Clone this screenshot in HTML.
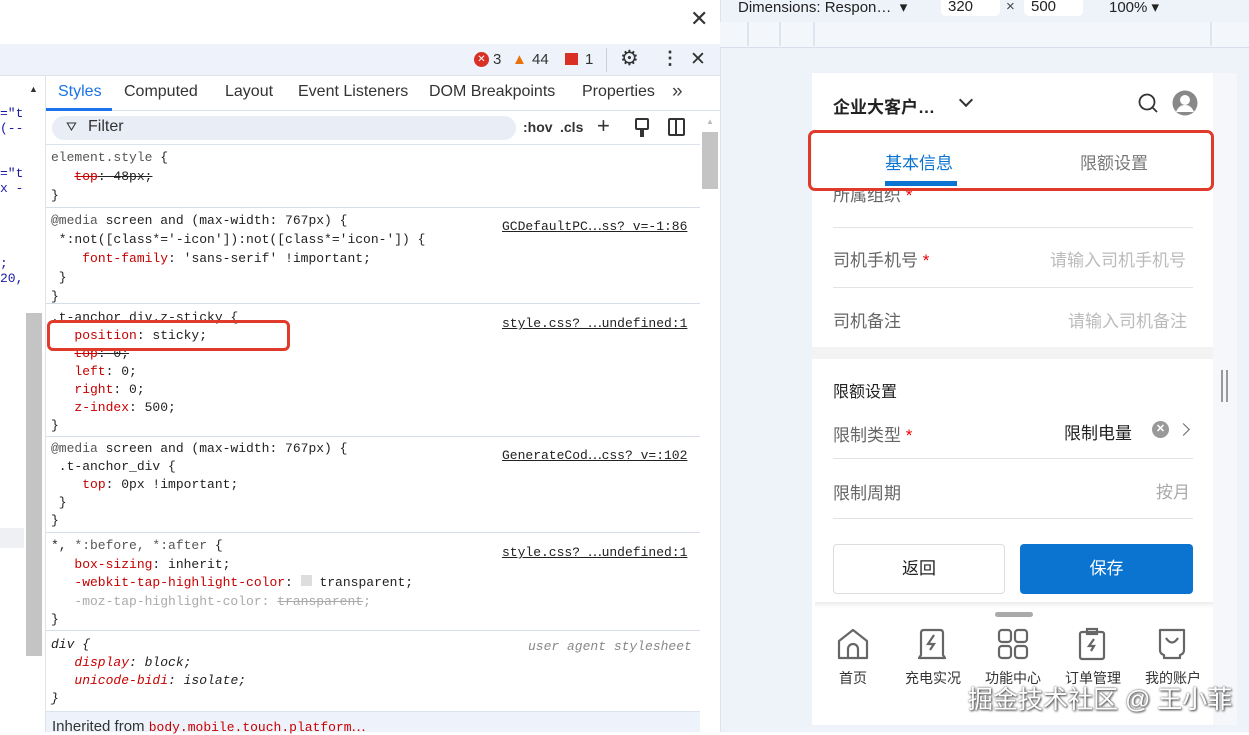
<!DOCTYPE html>
<html><head><meta charset="utf-8"><style>
*{box-sizing:border-box;margin:0;padding:0}
body{width:1249px;height:732px;overflow:hidden;background:#fff;font-family:"Liberation Sans","Noto Sans CJK SC",sans-serif;position:relative}
.a{position:absolute}
.m{font-family:"Liberation Mono","Noto Sans CJK SC",monospace;font-size:13px;color:#222;white-space:pre}
.r{color:#c80000}
.lnk{text-decoration:underline;color:#222;font-size:13px}
.sep{position:absolute;left:46px;width:654px;height:1px;background:#d8dee8}
.cn{font-family:"Liberation Sans","Noto Sans CJK SC",sans-serif}
.hl{position:absolute;left:833px;width:360px;height:1px;background:#e3e3e3}
.lbl{font-size:17px;color:#666}
.tb{position:absolute;top:668px;font-size:14px;color:#333;text-align:center;width:70px}
.tab{position:absolute;top:83px;font-size:16px;color:#333}
</style></head><body>
<div class="a" style="left:690px;top:6px;font-size:22px;color:#333">✕</div>
<div class="a" style="left:0;top:44px;width:720px;height:32px;background:#eef3fb;border-bottom:1px solid #dde3ee"></div>
<div class="a" style="left:474px;top:52px;width:15px;height:15px;border-radius:50%;background:#d93025;color:#fff;font-size:10px;text-align:center;line-height:15px">✕</div>
<div class="a" style="left:493px;top:51px;font-size:15px;color:#333">3</div>
<div class="a" style="left:512px;top:51px;font-size:15px;color:#e8710a">▲</div>
<div class="a" style="left:532px;top:51px;font-size:15px;color:#333">44</div>
<div class="a" style="left:565px;top:53px;width:13px;height:12px;background:#d93025"></div>
<div class="a" style="left:585px;top:51px;font-size:15px;color:#333">1</div>
<div class="a" style="left:606px;top:48px;width:1px;height:24px;background:#ccd"></div>
<div class="a" style="left:620px;top:46px;font-size:21px;color:#333">⚙</div>
<div class="a" style="left:661px;top:48px;font-size:18px;color:#333;font-weight:bold">⋮</div>
<div class="a" style="left:690px;top:48px;font-size:19px;color:#333">✕</div>
<div class="a" style="left:0;top:76px;width:46px;height:656px;background:#fff;border-right:1px solid #e0e4ea"></div>
<div class="a" style="left:0;top:528px;width:24px;height:20px;background:#eef0f3"></div>
<div class="a" style="left:26px;top:313px;width:16px;height:343px;background:#c4c4c4"></div>
<div class="a" style="left:29px;top:84px;font-size:9px;color:#333">▲</div>
<div class="a m" style="left:0;top:106px;color:#1a1aa6">="t
(--


="t
x -




;
20,</div>
<div class="a" style="left:46px;top:76px;width:674px;height:35px;border-bottom:1px solid #dde3ee"></div>
<div class="tab" style="left:58px;color:#1a73e8">Styles</div>
<div class="a" style="left:46px;top:108px;width:66px;height:3px;background:#1a73e8"></div>
<div class="tab" style="left:124px">Computed</div>
<div class="tab" style="left:225px">Layout</div>
<div class="tab" style="left:298px">Event Listeners</div>
<div class="tab" style="left:429px">DOM Breakpoints</div>
<div class="tab" style="left:582px">Properties</div>
<div class="a" style="left:672px;top:81px;font-size:19px;color:#444">»</div>
<div class="a" style="left:52px;top:116px;width:464px;height:24px;border-radius:12px;background:#e9eef6"></div>
<div class="a" style="left:66px;top:119px;font-size:13px;color:#333">⛛</div>
<div class="a" style="left:88px;top:118px;font-size:16px;color:#333">Filter</div>
<div class="a" style="left:523px;top:119px;font-size:14px;color:#333;font-weight:bold">:hov</div>
<div class="a" style="left:560px;top:119px;font-size:14px;color:#333;font-weight:bold">.cls</div>
<div class="a" style="left:597px;top:113px;font-size:22px;color:#333">+</div>
<div class="a" style="left:635px;top:118px;width:14px;height:12px;border:2px solid #333;border-radius:2px"></div>
<div class="a" style="left:640px;top:130px;width:4px;height:7px;background:#333"></div>
<div class="a" style="left:668px;top:118px;width:17px;height:18px;border:2px solid #333;border-radius:2px"></div>
<div class="a" style="left:675px;top:118px;width:2px;height:18px;background:#333"></div>
<div class="a" style="left:46px;top:144px;width:654px;height:1px;background:#dde3ee"></div>
<div class="a" style="left:700px;top:111px;width:20px;height:621px;background:#fff"></div>
<div class="a" style="left:706px;top:117px;font-size:8px;color:#bbb">▲</div>
<div class="a" style="left:702px;top:132px;width:16px;height:57px;background:#c4c4c4"></div>
<div class="a m" style="left:51px;top:148px;line-height:19px"><span style="color:#555">element.style</span> {
   <span class="r" style="text-decoration:line-through">top</span><span style="text-decoration:line-through">: 48px;</span>
}</div>
<div class="sep" style="top:207px"></div>
<div class="a m" style="left:51px;top:211px;line-height:19px"><span style="color:#555">@media</span> screen and (max-width: 767px) {
 *:not([class*='-icon']):not([class*='icon-']) {
    <span class="r">font-family</span>: 'sans-serif' !important;
 }
}</div>
<div class="a lnk m" style="left:502px;top:215px">GCDefaultPC⋯ss?_v=-1:86</div>
<div class="sep" style="top:303px"></div>
<div class="a m" style="left:51px;top:309px;line-height:18px">.t-anchor_div.z-sticky {
   <span class="r">position</span>: sticky;
   <span class="r" style="text-decoration:line-through">top</span><span style="text-decoration:line-through">: 0;</span>
   <span class="r">left</span>: 0;
   <span class="r">right</span>: 0;
   <span class="r">z-index</span>: 500;
}</div>
<div class="a lnk m" style="left:502px;top:312px">style.css?_⋯undefined:1</div>
<div class="a" style="left:47px;top:320px;width:243px;height:31px;border:3px solid #e03a2a;border-radius:6px"></div>
<div class="sep" style="top:436px"></div>
<div class="a m" style="left:51px;top:440px;line-height:18px"><span style="color:#555">@media</span> screen and (max-width: 767px) {
 .t-anchor_div {
    <span class="r">top</span>: 0px !important;
 }
}</div>
<div class="a lnk m" style="left:502px;top:444px">GenerateCod⋯css?_v=:102</div>
<div class="sep" style="top:532px"></div>
<div class="a m" style="left:51px;top:537px;line-height:18.5px">*, <span style="color:#555">*:before, *:after</span> {
   <span class="r">box-sizing</span>: inherit;
   <span class="r">-webkit-tap-highlight-color</span>: <span style="display:inline-block;width:11px;height:11px;background:#ddd"></span> transparent;
   <span style="color:#aaa">-moz-tap-highlight-color: <s>transparent</s>;</span>
}</div>
<div class="a lnk m" style="left:502px;top:541px">style.css?_⋯undefined:1</div>
<div class="sep" style="top:630px"></div>
<div class="a m" style="left:51px;top:636px;line-height:18px;font-style:italic">div {
   <span class="r">display</span>: block;
   <span class="r">unicode-bidi</span>: isolate;
}</div>
<div class="a m" style="left:528px;top:639px;font-style:italic;color:#888">user agent stylesheet</div>
<div class="a" style="left:46px;top:711px;width:654px;height:21px;background:#eef3fb;border-top:1px solid #dde3ee"></div>
<div class="a" style="left:52px;top:716px;font-size:15px;color:#333">Inherited from <span class="m r" style="font-size:13px">body.mobile.touch.platform⋯</span></div>
<div class="a" style="left:720px;top:0;width:529px;height:732px;background:#eef2f9;border-left:1px solid #dfe3ea"></div>
<div class="a" style="left:738px;top:-2px;font-size:15px;color:#222">Dimensions: Respon… &nbsp;▾</div>
<div class="a" style="left:941px;top:0;width:59px;height:16px;background:#fff;border-radius:0 0 5px 5px"></div>
<div class="a" style="left:948px;top:-2px;font-size:15px;color:#222">320</div>
<div class="a" style="left:1006px;top:-2px;font-size:15px;color:#444">×</div>
<div class="a" style="left:1024px;top:0;width:59px;height:16px;background:#fff;border-radius:0 0 5px 5px"></div>
<div class="a" style="left:1031px;top:-2px;font-size:15px;color:#222">500</div>
<div class="a" style="left:1109px;top:-2px;font-size:15px;color:#222">100% ▾</div>
<div class="a" style="left:720px;top:22px;width:529px;height:26px;background:#f3f6fb;border-bottom:1px solid #d8dfeb"></div>
<div class="a" style="left:747px;top:22px;width:2px;height:24px;background:#dfe5ef"></div>
<div class="a" style="left:779px;top:22px;width:2px;height:24px;background:#dfe5ef"></div>
<div class="a" style="left:813px;top:22px;width:2px;height:24px;background:#dfe5ef"></div>
<div class="a" style="left:1210px;top:22px;width:2px;height:24px;background:#dfe5ef"></div>
<div class="a" style="left:812px;top:73px;width:401px;height:652px;background:#fff"></div>
<div class="a" style="left:1213px;top:73px;width:24px;height:652px;background:#f5f7fb"></div>
<div class="a cn" style="left:833px;top:93px;font-size:17px;font-weight:bold;color:#222">企业大客户…</div>
<div class="a" style="left:961px;top:95px;width:10px;height:10px;border-right:2.5px solid #333;border-bottom:2.5px solid #333;transform:rotate(45deg)"></div>
<svg class="a" style="left:1137px;top:92px" width="24" height="24" viewBox="0 0 24 24"><circle cx="10" cy="10" r="7.5" fill="none" stroke="#333" stroke-width="1.8"/><path d="M15.5 15.5L20 20" stroke="#333" stroke-width="1.8"/></svg>
<svg class="a" style="left:1172px;top:90px" width="26" height="26" viewBox="0 0 26 26"><circle cx="13" cy="13" r="12.5" fill="#888"/><circle cx="13" cy="10" r="5" fill="#fff"/><path d="M4 22c2-5 5-7 9-7s7 2 9 7" fill="#fff"/></svg>
<div class="a cn" style="left:885px;top:149px;font-size:17px;color:#0a74d0">基本信息</div>
<div class="a" style="left:885px;top:181px;width:72px;height:5px;background:#0a74d0"></div>
<div class="a cn" style="left:1080px;top:149px;font-size:17px;color:#777">限额设置</div>
<div class="a" style="left:808px;top:130px;width:406px;height:61px;border:3px solid #e03a2a;border-radius:7px"></div>
<div class="a cn lbl" style="left:833px;top:191px;height:13px;overflow:hidden;line-height:10px">所属组织 <span style="color:#e00">*</span></div>
<div class="hl" style="top:227px"></div>
<div class="a cn lbl" style="left:833px;top:246px">司机手机号 <span style="color:#e00">*</span></div>
<div class="a cn" style="left:1050px;top:246px;font-size:17px;color:#bbb">请输入司机手机号</div>
<div class="hl" style="top:287px"></div>
<div class="a cn lbl" style="left:833px;top:307px">司机备注</div>
<div class="a cn" style="left:1068px;top:307px;font-size:17px;color:#bbb">请输入司机备注</div>
<div class="a" style="left:812px;top:347px;width:401px;height:12px;background:#f3f3f3"></div>
<div class="a cn" style="left:833px;top:378px;font-size:16px;color:#222">限额设置</div>
<div class="a" style="left:1221px;top:370px;width:2px;height:32px;background:#999"></div>
<div class="a" style="left:1226px;top:370px;width:2px;height:32px;background:#999"></div>
<div class="a cn lbl" style="left:833px;top:421px">限制类型 <span style="color:#e00">*</span></div>
<div class="a cn" style="left:1064px;top:419px;font-size:17px;color:#222">限制电量</div>
<div class="a" style="left:1152px;top:421px;width:17px;height:17px;border-radius:50%;background:#999;color:#fff;font-size:11px;text-align:center;line-height:17px;font-weight:bold">✕</div>
<div class="a" style="left:1179px;top:425px;width:9px;height:9px;border-right:1.5px solid #666;border-top:1.5px solid #666;transform:rotate(45deg)"></div>
<div class="hl" style="top:458px"></div>
<div class="a cn lbl" style="left:833px;top:479px">限制周期</div>
<div class="a cn" style="left:1156px;top:478px;font-size:17px;color:#aaa">按月</div>
<div class="hl" style="top:518px"></div>
<div class="a cn" style="left:833px;top:544px;width:172px;height:50px;border:1px solid #ddd;border-radius:4px;text-align:center;line-height:48px;font-size:17px;color:#222">返回</div>
<div class="a cn" style="left:1020px;top:544px;width:173px;height:50px;background:#0a74d0;border-radius:4px;text-align:center;line-height:50px;font-size:17px;color:#fff">保存</div>
<div class="a" style="left:815px;top:602px;width:398px;height:6px;background:linear-gradient(#ececec,#fff)"></div>
<div class="a" style="left:995px;top:612px;width:38px;height:5px;border-radius:3px;background:#aaa"></div>
<svg class="a" style="left:836px;top:627px" width="34" height="34" viewBox="0 0 34 34" fill="none" stroke="#666" stroke-width="2.2"><path d="M3 14L17 3l14 11v17H3z" stroke-linejoin="round"/><path d="M12 31V22a5 5 0 0 1 10 0v9"/></svg>
<svg class="a" style="left:915px;top:627px" width="34" height="34" viewBox="0 0 34 34" fill="none" stroke="#666" stroke-width="2.2"><path d="M6 6q0-3 3-3h16q3 0 3 3v22l2 3H4l2-3z" stroke-linejoin="round"/><path d="M19 8l-6 9h6l-4 6" /></svg>
<svg class="a" style="left:996px;top:627px" width="34" height="34" viewBox="0 0 34 34" fill="none" stroke="#666" stroke-width="2.2"><rect x="3" y="3" width="12" height="12" rx="3"/><rect x="19" y="3" width="12" height="12" rx="3"/><rect x="3" y="19" width="12" height="12" rx="3"/><rect x="19" y="19" width="12" height="12" rx="3"/></svg>
<svg class="a" style="left:1075px;top:627px" width="34" height="34" viewBox="0 0 34 34" fill="none" stroke="#666" stroke-width="2.2"><rect x="5" y="5" width="24" height="27" rx="2"/><rect x="12" y="2" width="10" height="5"/><path d="M19 12l-5 7h5l-3 5"/></svg>
<svg class="a" style="left:1155px;top:627px" width="34" height="34" viewBox="0 0 34 34" fill="none" stroke="#666" stroke-width="2.2"><path d="M5 3h24v20q0 4-4 5v3H9v-3q-4-1-4-5z" stroke-linejoin="round"/><path d="M11 11q6 9 12 0"/></svg>
<div class="tb cn" style="left:818px">首页</div>
<div class="tb cn" style="left:898px">充电实况</div>
<div class="tb cn" style="left:978px">功能中心</div>
<div class="tb cn" style="left:1058px">订单管理</div>
<div class="tb cn" style="left:1138px">我的账户</div>
<div class="a cn" style="left:968px;top:680px;font-size:25px;color:#fff;text-shadow:0 0 2px #555,1px 1px 2px #444">掘金技术社区 @ 王小菲</div>
</body></html>
